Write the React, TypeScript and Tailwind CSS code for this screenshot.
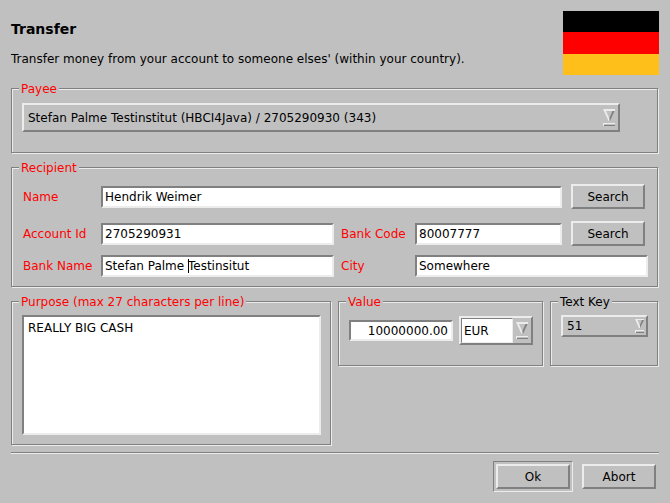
import { useId, type ReactNode } from "react";

const groove =
  "border border-[#808080] shadow-[1px_1px_0_#ececec,inset_1px_1px_0_#ececec]";
const raised =
  "border-2 border-t-[#ececec] border-l-[#ececec] border-b-[#808080] border-r-[#808080]";
const sunken =
  "border-2 border-t-[#808080] border-l-[#808080] border-b-[#ececec] border-r-[#ececec]";

function Group({
  title,
  required = true,
  className = "",
  bodyClass,
  children,
}: {
  title: string;
  required?: boolean;
  className?: string;
  bodyClass: string;
  children: ReactNode;
}) {
  return (
    <fieldset className={`min-w-0 ${groove} ${className}`}>
      <legend
        className={`ml-[7px] bg-[#c0c0c0] px-[2px] pt-[2px] leading-[13px] ${required ? "text-[#ff0000]" : ""}`}
      >
        {title}
      </legend>
      <div className={bodyClass}>{children}</div>
    </fieldset>
  );
}

function Arrow({ small = false }: { small?: boolean }) {
  if (small) {
    return (
      <svg width="9" height="14" viewBox="0 0 9 14" aria-hidden="true">
        <path d="M7 1H9L5 9H4.500V7Z" fill="#808080" />
        <path d="M0 0H9V1H2.500L5 7V9H4Z" fill="#ececec" />
        <path d="M0 11H9V12H1V14H0Z" fill="#ececec" />
        <path d="M1 13H9V14H1Z" fill="#808080" />
      </svg>
    );
  }
  return (
    <svg width="12" height="17" viewBox="0 0 12 17" aria-hidden="true">
      <path d="M9.500 2H11.500L7 12H6V10Z" fill="#808080" />
      <path d="M0 0H12V2H3L6.500 10V12H5.500Z" fill="#ececec" />
      <path d="M0 14H12V15H1V17H0Z" fill="#ececec" />
      <path d="M1 16H12V17H1Z" fill="#808080" />
    </svg>
  );
}

function Field({
  id,
  label,
  value,
  className = "",
}: {
  id: string;
  label: string;
  value: string;
  className?: string;
}) {
  return (
    <>
      <label htmlFor={id} className="text-[#ff0000]">
        {label}
      </label>
      <input
        id={id}
        defaultValue={value}
        className={`h-[22px] w-full min-w-0 bg-white px-[2px] outline-none ${sunken} ${className}`}
      />
    </>
  );
}

function PushButton({ children }: { children: ReactNode }) {
  return (
    <button type="button" className={`h-[25px] w-[74px] leading-[14px] ${raised}`}>
      {children}
    </button>
  );
}

export default function App() {
  const id = useId();
  return (
    <form
      className="min-h-screen bg-[#c0c0c0] px-[11px] pt-[11px] pb-[11px] font-['DejaVu_Sans',sans-serif] text-[12px] leading-[14px] text-black"
      onSubmit={(e) => e.preventDefault()}
    >
      <header className="flex items-start justify-between">
        <div>
          <h1 className="pt-[10px] text-[14px] leading-[16px] font-bold">Transfer</h1>
          <p className="pt-[15px]">
            Transfer money from your account to someone elses' (within your country).
          </p>
        </div>
        <div role="img" aria-label="Germany" className="flex h-[64px] w-[96px] shrink-0 flex-col">
          <div className="h-[21px] bg-black" />
          <div className="h-[22px] bg-[#ff0000]" />
          <div className="h-[21px] bg-[#ffbf1a]" />
        </div>
      </header>

      <div className="mt-[6px] mr-px flex flex-col gap-[7px]">
        <Group title="Payee" bodyClass="pt-[7px] pr-[37px] pb-[20px] pl-[10px]">
          <div className={`grid h-[29px] items-center ${raised}`}>
            <select
              aria-label="Payee"
              className="col-start-1 row-start-1 h-full w-full appearance-none bg-transparent px-[4px] outline-none"
            >
              <option>Stefan Palme Testinstitut (HBCI4Java) / 2705290930 (343)</option>
            </select>
            <span className="pointer-events-none col-start-1 row-start-1 mr-[3px] justify-self-end">
              <Arrow />
            </span>
          </div>
        </Group>

        <Group title="Recipient" bodyClass="pt-[9px] pr-[9px] pb-[9px] pl-[11px]">
          <div className="grid grid-cols-[78px_minmax(0,233fr)_7px_74px_minmax(0,147fr)_9px_77px] items-center gap-y-[12px]">
            <Field id={`${id}-name`} label="Name" value="Hendrik Weimer" className="col-span-4" />
            <span />
            <PushButton>Search</PushButton>

            <Field id={`${id}-account`} label="Account Id" value="2705290931" />
            <span />
            <Field id={`${id}-code`} label="Bank Code" value="80007777" />
            <span />
            <PushButton>Search</PushButton>
          </div>
          <div className="mt-[9px] grid grid-cols-[78px_minmax(0,233fr)_7px_74px_minmax(0,147fr)_9px_77px] items-center">
            <label htmlFor={`${id}-bank`} className="text-[#ff0000]">
              Bank Name
            </label>
            <div className="relative">
              <input
                id={`${id}-bank`}
                defaultValue="Stefan Palme Testinsitut"
                className={`block h-[22px] w-full min-w-0 bg-white px-[2px] outline-none ${sunken}`}
              />
              <span
                aria-hidden="true"
                className="pointer-events-none absolute top-[4px] left-[4px] border-r border-black whitespace-pre text-transparent"
              >
                {"Stefan Palme "}
              </span>
            </div>
            <span />
            <Field id={`${id}-city`} label="City" value="Somewhere" className="col-span-3" />
          </div>
        </Group>

        <div className="flex items-start gap-[7px]">
          <Group
            title="Purpose (max 27 characters per line)"
            className="flex-[318]"
            bodyClass="pt-[6px] pr-[9px] pb-[9px] pl-[10px]"
          >
            <textarea
              aria-label="Purpose (max 27 characters per line)"
              defaultValue="REALLY BIG CASH"
              className={`block h-[120px] w-full resize-none bg-white px-[4px] py-[4px] outline-none ${sunken}`}
            />
          </Group>

          <Group
            title="Value"
            className="flex-[203]"
            bodyClass="flex items-center gap-[6px] pt-[7px] pr-[9px] pb-[20px] pl-[10px]"
          >
            <input
              aria-label="Value"
              defaultValue="10000000.00"
              className={`h-[21px] min-w-0 flex-1 bg-white px-[3px] text-right outline-none ${sunken}`}
            />
            <div className={`grid h-[29px] w-[74px] grid-cols-[52px_18px] items-center ${raised}`}>
              <span className="col-start-1 row-start-1 h-full border border-t-[#808080] border-r-[#ececec] border-b-[#ececec] border-l-[#808080] bg-white" />
              <span className="col-start-2 row-start-1 justify-self-center">
                <Arrow />
              </span>
              <select
                aria-label="Currency"
                className="col-span-2 col-start-1 row-start-1 h-full w-full appearance-none bg-transparent px-[3px] outline-none"
              >
                <option>EUR</option>
              </select>
            </div>
          </Group>

          <Group
            title="Text Key"
            required={false}
            className="flex-[106]"
            bodyClass="pt-[6px] pr-[9px] pb-[28px] pl-[10px]"
          >
            <div className={`grid h-[22px] items-center ${raised}`}>
              <select
                aria-label="Text Key"
                className="col-start-1 row-start-1 h-full w-full appearance-none bg-transparent px-[4px] outline-none"
              >
                <option>51</option>
              </select>
              <span className="pointer-events-none col-start-1 row-start-1 mr-[2px] justify-self-end">
                <Arrow small />
              </span>
            </div>
          </Group>
        </div>
      </div>

      <hr className="mt-[7px] h-[2px] border-0 border-t border-b border-t-[#808080] border-b-[#ececec]" />

      <footer className="mt-[7px] flex items-center justify-end gap-[9px] pr-[3px]">
        <div className="border border-t-[#808080] border-r-[#ececec] border-b-[#ececec] border-l-[#808080] p-[2px]">
          <PushButton>Ok</PushButton>
        </div>
        <PushButton>Abort</PushButton>
      </footer>
    </form>
  );
}
